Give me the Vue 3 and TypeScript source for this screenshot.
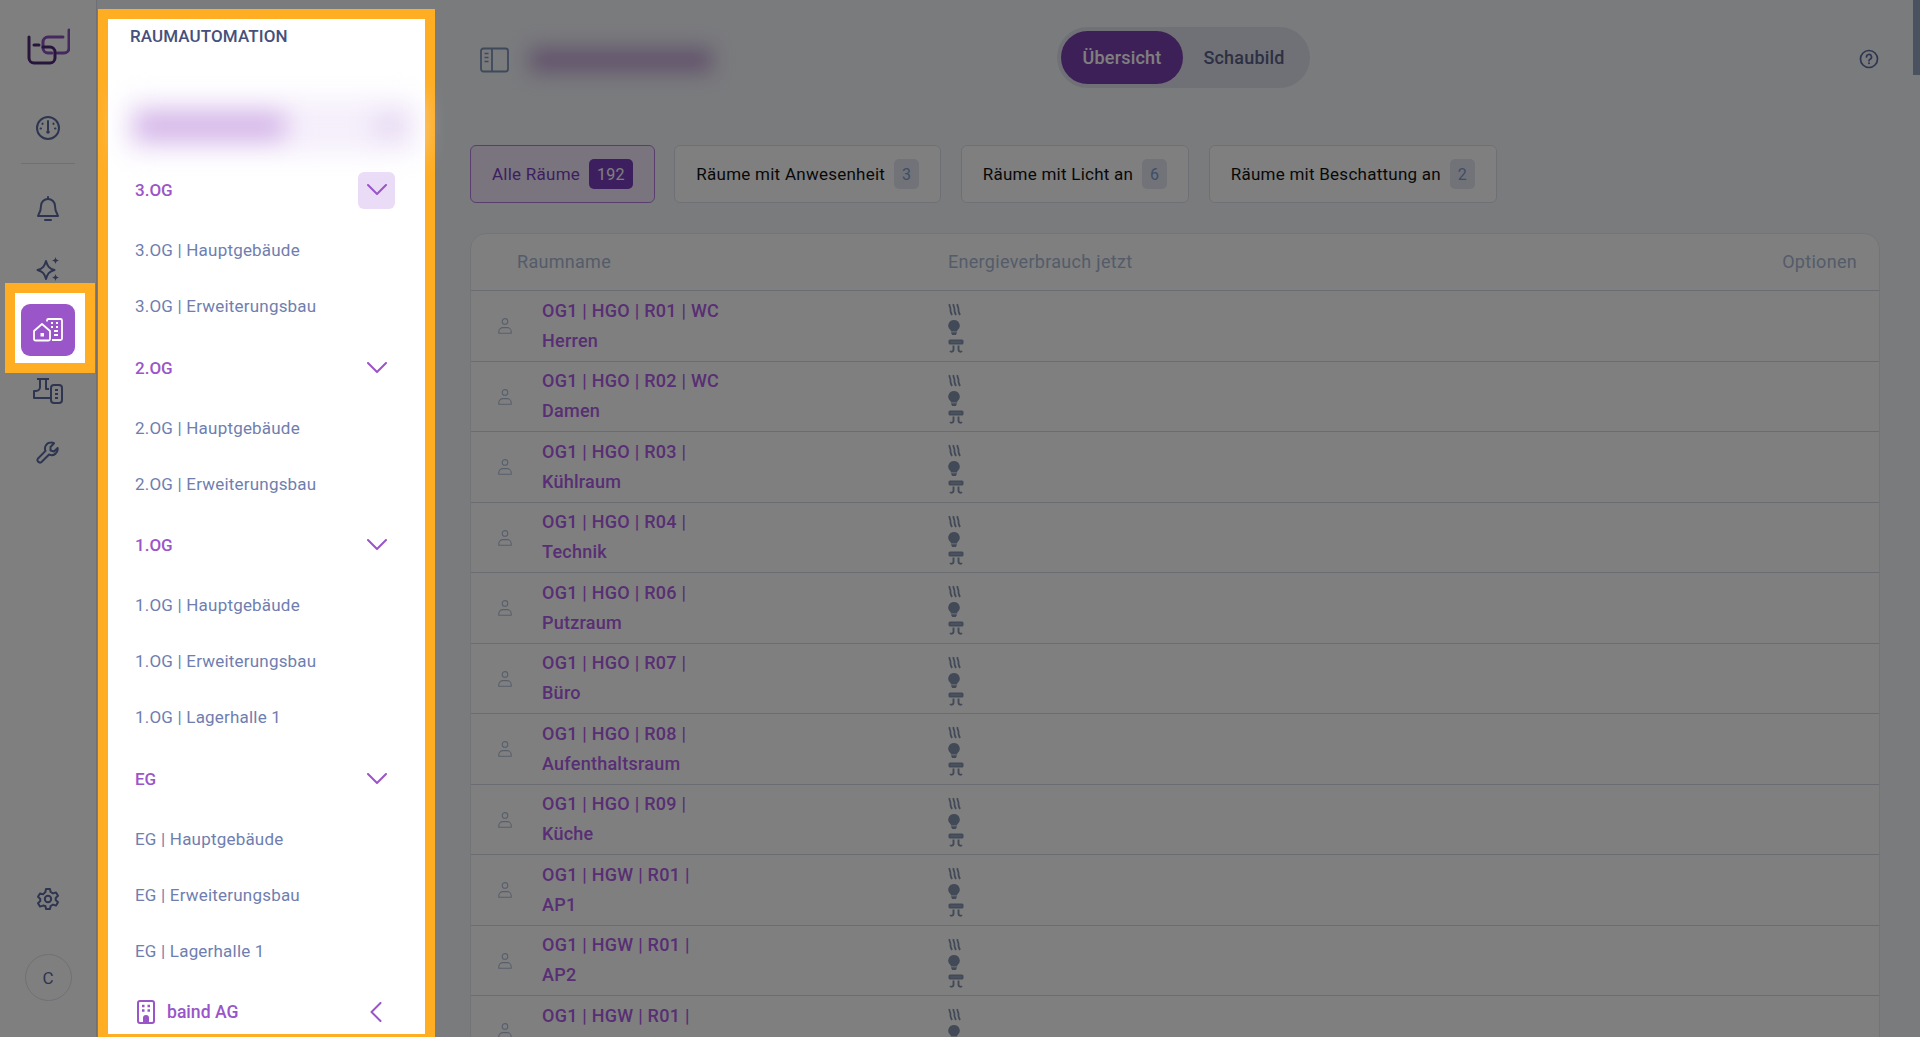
<script setup lang="ts">
interface Group {
  name: string
  items: string[]
  active?: boolean
}

const groups: Group[] = [
  { name: '3.OG', items: ['3.OG | Hauptgebäude', '3.OG | Erweiterungsbau'], active: true },
  { name: '2.OG', items: ['2.OG | Hauptgebäude', '2.OG | Erweiterungsbau'] },
  { name: '1.OG', items: ['1.OG | Hauptgebäude', '1.OG | Erweiterungsbau', '1.OG | Lagerhalle 1'] },
  { name: 'EG', items: ['EG | Hauptgebäude', 'EG | Erweiterungsbau', 'EG | Lagerhalle 1'] },
]

const filters = [
  { label: 'Alle Räume', count: 192, active: true },
  { label: 'Räume mit Anwesenheit', count: 3 },
  { label: 'Räume mit Licht an', count: 6 },
  { label: 'Räume mit Beschattung an', count: 2 },
]

const rooms = [
  'OG1 | HGO | R01 | WC Herren',
  'OG1 | HGO | R02 | WC Damen',
  'OG1 | HGO | R03 | Kühlraum',
  'OG1 | HGO | R04 | Technik',
  'OG1 | HGO | R06 | Putzraum',
  'OG1 | HGO | R07 | Büro',
  'OG1 | HGO | R08 | Aufenthaltsraum',
  'OG1 | HGO | R09 | Küche',
  'OG1 | HGW | R01 | AP1',
  'OG1 | HGW | R01 | AP2',
  'OG1 | HGW | R01 | AP3',
]
</script>

<template>
  <div class="page">
    <nav class="rail">
      <svg class="logo" width="44" height="38" viewBox="0 0 44 38" fill="none" stroke-width="3" stroke-linecap="round">
        <path d="M43 2v18a5 5 0 0 1-5 5h-7" stroke="#8a50c0" />
        <path d="M37 9H22a5 5 0 0 0-5 5v6a5 5 0 0 0 5 5h4" stroke="#8a50c0" />
        <path d="M3 9v21a5 5 0 0 0 5 5h16a5 5 0 0 0 5-5v-6a5 5 0 0 0-5-5h-7M8 17h5" stroke="#4e2a78" />
      </svg>
      <svg class="rail-icon gauge" width="26" height="26" viewBox="0 0 26 26" fill="none" stroke="#5c6aa0" stroke-width="2">
        <circle cx="13" cy="13" r="11" />
        <path d="M13 6v9M7.500 8.500v.5M18.500 8.500v.5M5.500 13.500h.5M20 13.500h.5" stroke-linecap="round" />
        <circle cx="13" cy="17" r="1.800" fill="#5c6aa0" stroke="none" />
      </svg>
      <div class="divider"></div>
      <svg class="rail-icon bell" width="24" height="26" viewBox="0 0 24 26" fill="none" stroke="#5c6aa0" stroke-width="2" stroke-linejoin="round">
        <path d="M12 3a7 7 0 0 0-7 7c0 6-3 9-3 10h20c0-1-3-4-3-10a7 7 0 0 0-7-7Z" />
        <path d="M12 1v2M9 24h6" stroke-linecap="round" />
      </svg>
      <svg class="rail-icon sparkle" width="24" height="24" viewBox="0 0 24 24" fill="none" stroke="#5c6aa0" stroke-width="2" stroke-linejoin="round">
        <path d="M10 4c1.400 5 3 7.600 8.500 9-5.500 1.400-7.100 4-8.500 9-1.400-5-3-7.600-8.500-9C7 11.600 8.600 9 10 4Z" />
        <path d="M19.500 0c.6 2.300 1.200 2.900 3.500 3.500-2.300.6-2.900 1.200-3.500 3.500-.6-2.300-1.200-2.900-3.500-3.500 2.300-.6 2.900-1.200 3.500-3.500ZM19.500 17c.6 2.300 1.200 2.900 3.500 3.500-2.300.6-2.900 1.200-3.500 3.500-.6-2.300-1.200-2.900-3.500-3.500 2.300-.6 2.900-1.200 3.500-3.500Z" fill="#5c6aa0" stroke="none" />
      </svg>
      <div class="active-spot">
        <div class="active-icon">
          <svg width="30" height="24" viewBox="0 0 30 24" fill="none" stroke="#fff" stroke-width="1.800" stroke-linejoin="round">
            <path d="M1 13 9 6l8 7v8a1.500 1.500 0 0 1-1.500 1.500h-13A1.500 1.500 0 0 1 1 21Z" />
            <path d="M14 3.500V2.500A1.500 1.500 0 0 1 15.500 1h12A1.500 1.500 0 0 1 29 2.500v18a1.500 1.500 0 0 1-1.500 1.500H19" />
            <rect x="7.500" y="15" width="3.500" height="3.500" fill="#fff" stroke="none" />
            <path d="M18 5h2M23 5h2M18 9h2M23 9h2M21 13h4M21 17h4" stroke-width="2" />
          </svg>
        </div>
      </div>
      <svg class="rail-icon factory" width="30" height="26" viewBox="0 0 30 26" fill="none" stroke="#5c6aa0" stroke-width="2" stroke-linejoin="round">
        <path d="M4 1h12M7 1v8a4 4 0 0 1-4 4H1v7h16M13 1v10h3" />
        <rect x="18" y="7" width="11" height="18" rx="3" />
        <path d="M22 12h3M22 16h3M22 20h3" />
      </svg>
      <svg class="rail-icon wrench" width="24" height="24" viewBox="0 0 24 24" fill="none" stroke="#5c6aa0" stroke-width="2" stroke-linejoin="round">
        <path d="M15 2.500a6 6 0 0 0-5.500 8.400L2 18.500a2.500 2.500 0 0 0 3.500 3.500l7.600-7.500A6 6 0 0 0 21.600 8l-3.600 3.500-3.500-1V7l3.500-3.800a6 6 0 0 0-3-.7Z" />
      </svg>
      <div class="rail-spacer"></div>
      <svg class="rail-icon gear" width="24" height="24" viewBox="0 0 24 24" fill="none" stroke="#5c6aa0" stroke-width="2" stroke-linejoin="round">
        <path d="M10 2h4l.6 3 2.400 1.400 3-1 2 3.400-2.300 2.100v2.200l2.300 2.100-2 3.400-3-1-2.400 1.400-.6 3h-4l-.6-3L7 18.600l-3 1-2-3.400 2.300-2.100v-2.200L2 9.800l2-3.400 3 1L9.400 5Z" />
        <circle cx="12" cy="12" r="3.200" />
      </svg>
      <div class="avatar">C</div>
    </nav>

    <aside class="panel">
      <div class="panel-inner">
        <h2 class="panel-title">RAUMAUTOMATION</h2>
        <div class="blurred-row">
          <span class="blur-text"></span>
          <span class="blur-dot"></span>
        </div>
        <section v-for="g in groups" :key="g.name" class="group">
          <div class="group-head">
            <span>{{ g.name }}</span>
            <span class="chevron" :class="{ on: g.active }">
              <svg width="20" height="12" viewBox="0 0 20 12" fill="none" stroke="#9a55c9" stroke-width="2" stroke-linecap="round" stroke-linejoin="round">
                <path d="m1 1 9 9 9-9" />
              </svg>
            </span>
          </div>
          <a v-for="item in g.items" :key="item" class="sub-item">{{ item }}</a>
        </section>
        <div class="company">
          <svg width="22" height="24" viewBox="0 0 22 24" fill="none" stroke="#9a55c9" stroke-width="2">
            <rect x="3" y="1" width="16" height="22" rx="2" />
            <path d="M7 6h2.500M12.500 6H15M7 10.500h2.500M12.500 10.500H15" stroke-width="2.400" />
            <path d="M8 23v-5a3 3 0 0 1 6 0v5Z" fill="#9a55c9" stroke="none" />
          </svg>
          <span>baind AG</span>
          <svg class="collapse" width="12" height="20" viewBox="0 0 12 20" fill="none" stroke="#9a55c9" stroke-width="2" stroke-linecap="round" stroke-linejoin="round">
            <path d="M10.500 1 1.500 10l9 9" />
          </svg>
        </div>
      </div>
    </aside>

    <main class="main">
      <header class="topbar">
        <svg class="side-toggle" width="30" height="26" viewBox="0 0 30 26" fill="none" stroke="#7c93b8" stroke-width="1.800">
          <rect x="1" y="1.500" width="27" height="23" rx="2.500" />
          <path d="M12 1.500v23" />
          <path d="M4.500 6.500h4M4.500 10.500h4M4.500 14.500h4" stroke-width="1.600" />
        </svg>
        <span class="blur-title"></span>
        <div class="toggle">
          <span class="toggle-btn on">Übersicht</span>
          <span class="toggle-btn">Schaubild</span>
        </div>
        <svg class="help" width="20" height="20" viewBox="0 0 20 20" fill="none" stroke="#5c6aa0" stroke-width="1.700">
          <circle cx="10" cy="10" r="8.500" />
          <path d="M7.500 8a2.500 2.500 0 1 1 3.600 2.200c-.8.400-1.100.8-1.100 1.600" stroke-linecap="round" />
          <circle cx="10" cy="14.300" r="1" fill="#5c6aa0" stroke="none" />
        </svg>
      </header>

      <div class="filters">
        <button v-for="f in filters" :key="f.label" class="filter" :class="{ on: f.active }">
          {{ f.label }}
          <span class="count">{{ f.count }}</span>
        </button>
      </div>

      <div class="table">
        <div class="thead">
          <span class="col-name">Raumname</span>
          <span class="col-energy">Energieverbrauch jetzt</span>
          <span class="col-opt">Optionen</span>
        </div>
        <div v-for="r in rooms" :key="r" class="row">
          <svg class="person" width="14" height="16" viewBox="0 0 14 16" fill="none" stroke="#b0bfd8" stroke-width="1.100">
            <circle cx="7" cy="3.400" r="2.800" />
            <path d="M.8 15.200v-1.600a4 4 0 0 1 4-4h4.400a4 4 0 0 1 4 4v1.600Z" />
          </svg>
          <span class="room-name">{{ r }}</span>
          <div class="energy">
            <svg width="13" height="13" viewBox="0 0 13 13" fill="none" stroke="#8494b0" stroke-width="1.800">
              <path d="M1.500 1C.8 3 3 5 2.500 6.500S3 10 4 12M5.500 1C4.800 3 7 5 6.500 6.500S7 10 8 12M9.500 1C8.800 3 11 5 10.500 6.500S11 10 12 12" />
            </svg>
            <svg width="13" height="15" viewBox="0 0 13 15">
              <path d="M6 0a5.800 5.800 0 0 0-3.200 10.600V11.500h6.400v-.9A5.800 5.800 0 0 0 6 0ZM3.200 12.300h5.600v1l-1 1.700H4.200l-1-1.700Z" fill="#8494b0" />
            </svg>
            <svg width="16" height="14" viewBox="0 0 16 14" fill="none" stroke="#8494b0" stroke-width="1.900">
              <rect x=".5" y=".5" width="15" height="5" rx="1.500" fill="#8494b0" stroke="none" />
              <path d="M2.500 3h11" stroke="#a9b6cb" stroke-width="1" />
              <path d="M5.500 6.500V11a2 2 0 0 1-3.500 1M10.500 6.500V11a2 2 0 0 0 3.500 1" />
            </svg>
          </div>
        </div>
      </div>
    </main>

    <div class="scroll-track"><div class="scroll-thumb"></div></div>
    <div class="dim"></div>
  </div>
</template>

<style>
html, body {
  margin: 0;
  height: 100%;
  overflow: hidden;
}
</style>

<style scoped>
.page {
  position: relative;
  display: flex;
  height: 1037px;
  overflow: hidden;
  background: #f4f6fb;
  font-family: Roboto, sans-serif;
}

.dim {
  position: absolute;
  inset: 0;
  z-index: 5;
  background: rgba(0, 0, 0, 0.5);
}

.rail {
  box-sizing: border-box;
  flex: 0 0 97px;
  display: flex;
  flex-direction: column;
  align-items: center;
  padding-top: 28px;
  background: #fff;
  border-right: 1px solid #dde1ea;
  height: 1037px;
}

.rail-icon {
  flex: none;
}

.logo { margin-bottom: 49px; }
.gauge { margin-bottom: 22px; }
.divider {
  width: 54px;
  height: 1px;
  background: #dde1ea;
  margin-bottom: 32px;
}
.bell { margin-bottom: 35px; }

.active-spot {
  position: relative;
  z-index: 6;
  box-sizing: border-box;
  display: flex;
  align-items: center;
  justify-content: center;
  flex: none;
  width: 70px;
  height: 70px;
  margin-top: 12px;
  margin-bottom: 15px;
  margin-left: 4px;
  padding: 4px 4px 0 0;
  background: #fff;
  outline: 10px solid #ffae24;
}

.active-icon {
  display: flex;
  align-items: center;
  justify-content: center;
  width: 54px;
  height: 52px;
  border-radius: 9px;
  background: #9a55c9;
}

.factory { margin-bottom: 36px; }

.rail-spacer { flex: 1; }
.gear { margin-bottom: 43px; }

.avatar {
  box-sizing: border-box;
  display: flex;
  align-items: center;
  justify-content: center;
  width: 47px;
  height: 47px;
  margin-bottom: 36px;
  border: 1px solid #dde1ea;
  border-radius: 50%;
  color: #5c6aa0;
  font-size: 17px;
}

.panel {
  position: relative;
  z-index: 6;
  box-sizing: border-box;
  flex: 0 0 317px;
  height: 1015px;
  margin: 19px 10px 0 11px;
  background: #fff;
  outline: 10px solid #ffae24;
}

.panel-inner {
  display: flex;
  flex-direction: column;
  height: 100%;
  padding-left: 25px;
  padding-right: 22px;
  box-sizing: border-box;
}

.panel-title {
  margin: 7px 0 0 -3px;
  font-size: 17px;
  line-height: 20px;
  font-weight: 500;
  letter-spacing: 0.1px;
  color: #46507a;
}

.blurred-row {
  display: flex;
  justify-content: space-between;
  align-items: center;
  flex: none;
  height: 56px;
  margin: 52px -14px 8px -8px;
  padding: 0 10px;
  background: #f5effb;
  filter: blur(13px);
}

.blur-text {
  width: 150px;
  height: 26px;
  background: #d0aee6;
}

.blur-dot {
  width: 34px;
  height: 24px;
  background: #e6d8f2;
}

.group { flex: none; margin-bottom: 5.500px; }

.group-head {
  display: flex;
  align-items: center;
  justify-content: space-between;
  height: 56px;
  padding-left: 2px;
  margin-bottom: 4px;
  color: #9a55c9;
  font-size: 17px;
  font-weight: 500;
}

.chevron {
  display: flex;
  align-items: center;
  justify-content: center;
  width: 37px;
  height: 37px;
  margin-right: 8px;
  border-radius: 6px;
}

.chevron.on { background: #eadcf7; }

.sub-item {
  display: flex;
  align-items: center;
  height: 56px;
  padding-left: 2px;
  color: #6f7eaf;
  font-size: 17px;
  letter-spacing: 0.2px;
}

.company {
  display: flex;
  align-items: center;
  gap: 10px;
  flex: none;
  height: 40px;
  margin-top: 8px;
  padding-left: 2px;
  color: #9a55c9;
  font-size: 17.600px;
  font-weight: 500;
}

.collapse { margin-left: auto; margin-right: 21px; }

.main {
  flex: 1;
  min-width: 0;
  padding: 27px 40px 0 35px;
}

.topbar {
  position: relative;
  display: flex;
  align-items: center;
  height: 61px;
  padding-left: 10px;
}

.side-toggle { margin-top: 4px; }

.blur-title {
  width: 182px;
  height: 24px;
  margin-left: 20px;
  margin-top: 5px;
  background: #c4a6d8;
  filter: blur(10px);
}

.toggle {
  position: absolute;
  left: 587px;
  top: 0;
  display: flex;
  align-items: center;
  box-sizing: border-box;
  width: 253px;
  height: 61px;
  padding: 4px;
  border-radius: 31px;
  background: #dfe3ec;
  font-size: 18px;
  font-weight: 500;
  letter-spacing: 0.2px;
}

.toggle-btn {
  display: flex;
  align-items: center;
  justify-content: center;
  width: 122px;
  height: 53px;
  border-radius: 27px;
  color: #5a6088;
}

.toggle-btn.on {
  background: #7c40b0;
  color: #fff;
}

.help { margin-left: auto; margin-top: 3px; margin-right: 1px; }

.filters {
  display: flex;
  gap: 19.500px;
  margin-top: 57px;
}

.filter {
  display: flex;
  align-items: center;
  gap: 9px;
  box-sizing: border-box;
  height: 58px;
  padding: 0 21px 0 21px;
  border: 1px solid #dde1ea;
  border-radius: 6px;
  background: #fff;
  color: #111;
  font-family: Roboto, sans-serif;
  font-size: 17px;
  letter-spacing: 0.25px;
}

.filter.on {
  background: #f3e8fb;
  border-color: #b47fdc;
  color: #7b3ec0;
}

.count {
  display: flex;
  align-items: center;
  justify-content: center;
  min-width: 25px;
  height: 30px;
  border-radius: 5px;
  background: #e3e7f0;
  color: #7f9ad0;
  font-size: 16px;
}

.filter.on .count {
  padding: 0 8px;
  background: #7b3ec0;
  color: #fff;
}

.table {
  margin-top: 30px;
  border: 1px solid #e6e9f0;
  border-radius: 16px 16px 0 0;
  background: #fff;
}

.thead {
  display: flex;
  align-items: center;
  height: 54px;
  padding-bottom: 2px;
  border-bottom: 1px solid #d3d8e3;
  color: #a8b8d4;
  font-size: 18px;
  letter-spacing: 0.3px;
}

.col-name { width: 430px; padding-left: 46px; box-sizing: border-box; }
.col-energy { flex: 1; padding-left: 47px; }
.col-opt { padding-right: 22px; }

.row {
  display: flex;
  align-items: center;
  box-sizing: border-box;
  height: 70.500px;
  border-bottom: 1px solid #d3d8e3;
}

.person { flex: none; margin-left: 27px; margin-top: 1px; }

.room-name {
  box-sizing: border-box;
  width: 180px;
  margin-left: 30px;
  color: #b05ce8;
  font-size: 18px;
  font-weight: 500;
  letter-spacing: 0.25px;
  line-height: 30px;
}

.energy {
  display: flex;
  flex-direction: column;
  align-items: flex-start;
  gap: 4px;
  margin-left: 226px;
  margin-top: 5px;
}
.energy svg { display: block; flex: none; }

.scroll-track {
  position: absolute;
  top: 0;
  right: 0;
  width: 7px;
  height: 100%;
  background: #f4f6fb;
}

.scroll-thumb {
  width: 7px;
  height: 75px;
  background: #94a4c0;
}
</style>
